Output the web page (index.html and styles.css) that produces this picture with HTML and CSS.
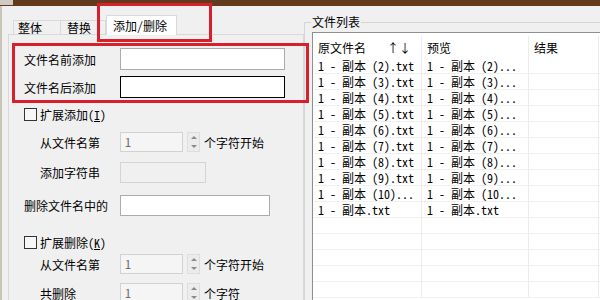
FILE: index.html
```html
<!DOCTYPE html>
<html lang="zh-CN">
  <head>
    <meta charset="UTF-8" />
    <title>批量重命名</title>
    <link rel="stylesheet" href="styles.css">
  </head>
  <body>
    <div class="titlebar"><span class="sysicon"></span></div>
    <div class="window">
      <div class="left">
        <div class="tabs">
          <div class="tab">整体</div>
          <div class="tab tab2">替换</div>
          <div class="tab active">添加/删除</div>
        </div>
        <div class="panel">
          <div class="row r1">
            <span class="lbl">文件名前添加</span>
            <input class="field wide" type="text" />
          </div>
          <div class="row r2">
            <span class="lbl">文件名后添加</span>
            <input class="field wide focus" type="text" />
          </div>
          <div class="row check r3">
            <span class="box"></span>
            <span>扩展添加(<u>I</u>)</span>
          </div>
          <div class="row sub r4">
            <span class="lbl">从文件名第</span>
            <span class="spin">1</span>
            <span class="spin-btns"><i class="up"></i><i class="down"></i></span>
            <span class="after">个字符开始</span>
          </div>
          <div class="row sub r5">
            <span class="lbl">添加字符串</span>
            <span class="field off"></span>
          </div>
          <div class="row r6">
            <span class="lbl">删除文件名中的</span>
            <input class="field del" type="text" />
          </div>
          <div class="row check r7">
            <span class="box"></span>
            <span>扩展删除(<u>K</u>)</span>
          </div>
          <div class="row sub r8">
            <span class="lbl">从文件名第</span>
            <span class="spin">1</span>
            <span class="spin-btns"><i class="up"></i><i class="down"></i></span>
            <span class="after">个字符开始</span>
          </div>
          <div class="row sub r9">
            <span class="lbl">共删除</span>
            <span class="spin">1</span>
            <span class="spin-btns"><i class="up"></i><i class="down"></i></span>
            <span class="after">个字符</span>
          </div>
        </div>
      </div>

      <fieldset class="files">
        <legend>文件列表</legend>
        <div class="list">
          <div class="lrow head">
            <span>原文件名<span class="sort">↑↓</span></span>
            <span>预览</span>
            <span>结果</span>
          </div>
          <div class="lrow"><span>1 - 副本 (2).txt</span><span>1 - 副本 (2)...</span><span></span></div>
          <div class="lrow"><span>1 - 副本 (3).txt</span><span>1 - 副本 (3)...</span><span></span></div>
          <div class="lrow"><span>1 - 副本 (4).txt</span><span>1 - 副本 (4)...</span><span></span></div>
          <div class="lrow"><span>1 - 副本 (5).txt</span><span>1 - 副本 (5)...</span><span></span></div>
          <div class="lrow"><span>1 - 副本 (6).txt</span><span>1 - 副本 (6)...</span><span></span></div>
          <div class="lrow"><span>1 - 副本 (7).txt</span><span>1 - 副本 (7)...</span><span></span></div>
          <div class="lrow"><span>1 - 副本 (8).txt</span><span>1 - 副本 (8)...</span><span></span></div>
          <div class="lrow"><span>1 - 副本 (9).txt</span><span>1 - 副本 (9)...</span><span></span></div>
          <div class="lrow"><span>1 - 副本 (10)...</span><span>1 - 副本 (10...</span><span></span></div>
          <div class="lrow"><span>1 - 副本.txt</span><span>1 - 副本.txt</span><span></span></div>
          <div class="lrow"><span></span><span></span><span></span></div>
          <div class="lrow"><span></span><span></span><span></span></div>
          <div class="lrow"><span></span><span></span><span></span></div>
          <div class="lrow"><span></span><span></span><span></span></div>
          <div class="lrow"><span></span><span></span><span></span></div>
        </div>
      </fieldset>
    </div>

    <!-- annotation boxes drawn over the screenshot -->
    <div class="mark mark-tab"></div>
    <div class="mark mark-rows"></div>
  </body>
</html>
```

FILE: styles.css
```css
body {
  margin: 0;
  width: 600px;
  height: 300px;
  overflow: hidden;
  position: relative;
  background-color: #f0f0f0;
  color: #000;
  font-family: "Noto Sans Mono CJK SC", "Noto Sans CJK SC", "Liberation Mono", monospace;
  font-size: 12px;
}
.titlebar {
  height: 6px;
  background-color: #633a1c;
}
.sysicon {
  display: block;
  width: 13px;
  height: 5px;
  background-color: #cfcac2;
}
.window {
  display: flex;
  height: 294px;
  overflow: hidden;
  border-left: 2px solid #c9c6b8;
}
.left {
  width: 296px;
  padding-left: 6px;
  display: flex;
  flex-direction: column;
  overflow: hidden;
}
.tabs {
  display: flex;
  align-items: flex-end;
  height: 28px;
  padding-left: 5px;
  flex: none;
}
.tab {
  box-sizing: border-box;
  width: 47px;
  height: 14px;
  line-height: 13px;
  padding-left: 4px;
  border: 1px solid #d9d9d9;
  border-bottom: none;
  border-right: none;
}
.tab2 {
  width: 46px;
  padding-left: 6px;
  border-right: 1px solid #d9d9d9;
}
.tab.active {
  width: 71px;
  height: 20px;
  line-height: 20px;
  padding-left: 6px;
  margin-bottom: -1px;
  background-color: #fff;
  border-right: 1px solid #d9d9d9;
  position: relative;
}
.panel {
  flex: 1;
  min-height: 0;
  border: 1px solid #d9d9d9;
  border-bottom: none;
  padding-left: 15px;
}
.row {
  display: flex;
  align-items: center;
}
.lbl {
  width: 96px;
}
.sub .lbl {
  width: 80px;
  margin-left: 16px;
}
.field {
  box-sizing: border-box;
  margin: 0;
  padding: 0 3px;
  height: 22px;
  border: 1px solid #ababab;
  background-color: #fff;
  font: inherit;
  outline: none;
}
.wide {
  width: 165px;
}
.focus {
  border-color: #000;
}
.del {
  width: 150px;
  height: 21px;
}
.off {
  width: 86px;
  height: 21px;
  border-color: #d4d4d4;
  background-color: #f0f0f0;
}
.check {
  height: 16px;
}
.box {
  box-sizing: border-box;
  width: 13px;
  height: 13px;
  margin-right: 3px;
  border: 1px solid #333;
  background-color: #f7f7f7;
}
.spin {
  box-sizing: border-box;
  width: 63px;
  height: 20px;
  line-height: 18px;
  padding-left: 4px;
  border: 1px solid #d2d2d2;
  background-color: #f5f5f5;
  color: #6d6d6d;
}
.spin-btns {
  box-sizing: border-box;
  width: 13px;
  height: 20px;
  margin-left: 4px;
  display: flex;
  flex-direction: column;
  border: 1px solid #dedede;
  background-color: #ececec;
}
.spin-btns i {
  flex: 1;
  display: flex;
  align-items: center;
  justify-content: center;
}
.spin-btns i::after {
  content: "";
  border-left: 3px solid transparent;
  border-right: 3px solid transparent;
}
.spin-btns .up::after {
  border-bottom: 3px solid #8a8a8a;
}
.spin-btns .down::after {
  border-top: 3px solid #8a8a8a;
}
.after {
  margin-left: 4px;
}
.r1 { margin-top: 13px; height: 22px; }
.r2 { margin-top: 6px; height: 22px; }
.r3 { margin-top: 8px; }
.r4 { margin-top: 10px; height: 20px; }
.r5 { margin-top: 10px; height: 21px; }
.r6 { margin-top: 12px; height: 21px; }
.r7 { margin-top: 18px; }
.r8 { margin-top: 4px; height: 20px; }
.r9 { margin-top: 9px; height: 20px; }

.files {
  flex: 1;
  min-width: 0;
  margin: 8px 0 0 0;
  padding: 2px 0 0 7px;
  border: 1px solid #d5d5d5;
  border-right: none;
  border-bottom: none;
  overflow: hidden;
}
.files legend {
  padding: 0 1px;
  margin-left: -1px;
  line-height: 16px;
}
.list {
  height: 267px;
  overflow: hidden;
  border: 1px solid #8f8f8f;
  border-right: none;
  border-bottom: none;
  background-color: #fff;
}
.lrow {
  display: grid;
  grid-template-columns: 109px 107px 70px;
  height: 16px;
  line-height: 15px;
  border-bottom: 1px solid #f0f0f0;
  box-sizing: border-box;
  white-space: nowrap;
}
.lrow span {
  padding-left: 5px;
  border-right: 1px solid #ececec;
  overflow: hidden;
}
.lrow .sort {
  padding-left: 0;
  margin-left: 21px;
  border: none;
  overflow: visible;
}
.lrow.head {
  height: 25px;
  line-height: 24px;
  padding-top: 3px;
  border-bottom: none;
}
.mark {
  position: absolute;
  box-sizing: border-box;
  border: 3px solid #d8202c;
}
.mark-tab {
  left: 97px;
  top: 3px;
  width: 115px;
  height: 39px;
}
.mark-rows {
  left: 12px;
  top: 43px;
  width: 297px;
  height: 60px;
}
```
